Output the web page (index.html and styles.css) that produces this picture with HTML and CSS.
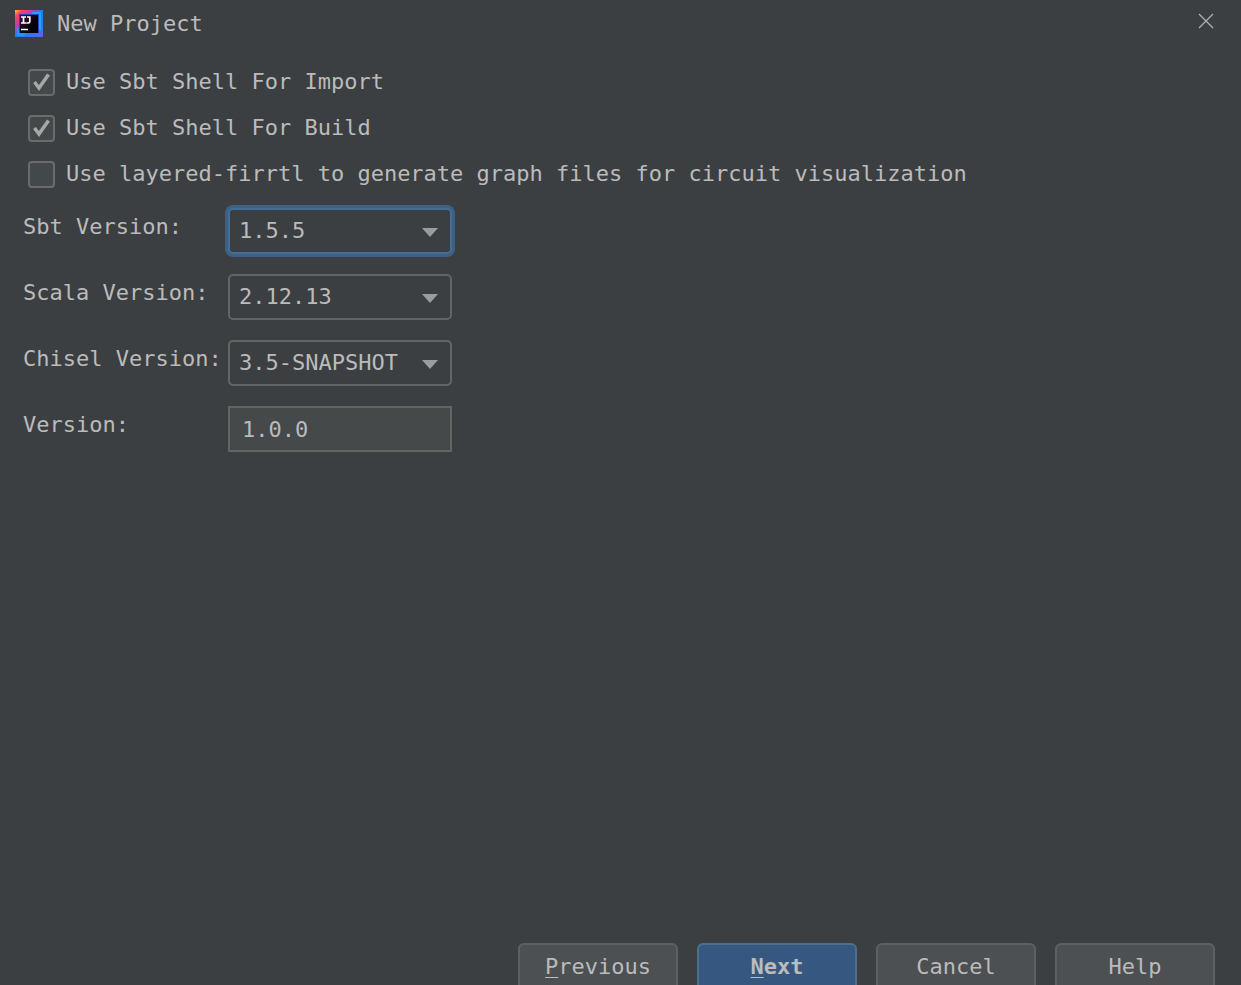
FILE: index.html
```html
<!DOCTYPE html>
<html lang="en">
<head>
<meta charset="utf-8">
<title>New Project</title>
<link rel="stylesheet" href="styles.css">
</head>
<body>
<div class="dialog">
  <header class="titlebar">
    <svg class="logo" viewBox="0 0 28 28" aria-hidden="true">
      <defs>
        <linearGradient id="edge" x1="0" y1="0" x2="1" y2="1">
          <stop offset="0" stop-color="#ffc53a"/>
          <stop offset=".14" stop-color="#fe3f63"/>
          <stop offset=".34" stop-color="#b83fae"/>
          <stop offset=".5" stop-color="#1484f5"/>
          <stop offset="1" stop-color="#5a62ee"/>
        </linearGradient>
        <linearGradient id="core" x1="0" y1="0" x2="1" y2="1">
          <stop offset="0" stop-color="#4a0d3c"/>
          <stop offset=".6" stop-color="#050208"/>
        </linearGradient>
      </defs>
      <rect width="28" height="27" fill="url(#edge)"/>
      <path d="M18 2h8v19l-3-3V5h-8z" fill="#20a5f8"/>
      <path d="M2 17l3 2v4h6l-2 3H2z" fill="#149cf8"/>
      <rect x="4" y="4" width="20" height="19" fill="#1b4fae"/>
      <rect x="5" y="5" width="18" height="18" fill="url(#core)"/>
      <path d="M6 7h5M8.500 7v6M6 13h5M12 7h3.500M14.800 6.200v5.300q0 1.500-1.500 1.500h-2M6 19.500h7" fill="none" stroke="#fff" stroke-width="1.700"/>
    </svg>
    <h1 class="title">New Project</h1>
    <button class="close" type="button" aria-label="Close">
      <svg viewBox="0 0 16 16" aria-hidden="true"><path d="M1 1l14 14M15 1L1 15"/></svg>
    </button>
  </header>
  <main class="content">
    <div class="checks">
      <label class="check"><input type="checkbox" checked>Use Sbt Shell For Import</label>
      <label class="check"><input type="checkbox" checked>Use Sbt Shell For Build</label>
      <label class="check"><input type="checkbox">Use layered-firrtl to generate graph files for circuit visualization</label>
    </div>
    <div class="fields">
      <label class="name" for="sbt">Sbt Version:</label>
      <div class="combo"><select id="sbt" class="field active"><option>1.5.5</option></select><svg class="arrow" viewBox="0 0 16 9" aria-hidden="true"><path d="M0 0h16L8 9z"/></svg></div>
      <label class="name" for="scala">Scala Version:</label>
      <div class="combo"><select id="scala" class="field"><option>2.12.13</option></select><svg class="arrow" viewBox="0 0 16 9" aria-hidden="true"><path d="M0 0h16L8 9z"/></svg></div>
      <label class="name" for="chisel">Chisel Version:</label>
      <div class="combo"><select id="chisel" class="field"><option>3.5-SNAPSHOT</option></select><svg class="arrow" viewBox="0 0 16 9" aria-hidden="true"><path d="M0 0h16L8 9z"/></svg></div>
      <label class="name" for="version">Version:</label>
      <input id="version" class="field text" type="text" value="1.0.0">
    </div>
  </main>
  <footer class="actions">
    <button class="button" type="button"><span class="key">P</span>revious</button>
    <button class="button primary" type="button"><span class="key">N</span>ext</button>
    <button class="button" type="button">Cancel</button>
    <button class="button" type="button">Help</button>
  </footer>
</div>
</body>
</html>
```
FILE: styles.css
```css
* {
  box-sizing: border-box;
}

body {
  margin: 0;
  background: #3c3f41;
  color: #bbbbbb;
}

body,
button,
input,
select {
  font-family: "DejaVu Sans Mono", monospace;
  font-size: 22px;
  line-height: 28px;
}

.dialog {
  display: flex;
  flex-direction: column;
  height: 100vh;
  overflow: hidden;
}

.titlebar {
  display: flex;
  align-items: center;
  gap: 14px;
  height: 48px;
  padding: 0 27px 0 15px;
}

.logo {
  width: 28px;
  height: 28px;
}

.title {
  flex: 1;
  margin: 0;
  font-size: 22px;
  font-weight: normal;
}

.close {
  display: flex;
  padding: 0 0 6px;
  border: 0;
  background: none;
}

.close svg {
  width: 16px;
  height: 16px;
  fill: none;
  stroke: #aeb0b1;
  stroke-width: 1.3;
}

.content {
  flex: 1;
  padding: 20px 23px;
}

.checks {
  display: grid;
  gap: 18px;
  padding-left: 5px;
}

.check {
  display: flex;
  align-items: center;
  gap: 11px;
}

.check input {
  appearance: none;
  flex: none;
  width: 27px;
  height: 27px;
  margin: 0;
  border: 2px solid #6b6b6b;
  border-radius: 4px;
  background: #43494a;
}

.check input:checked {
  background: #43494a url("data:image/svg+xml,%3Csvg xmlns='http://www.w3.org/2000/svg' viewBox='0 0 23 23'%3E%3Cpath d='M4.500 11l4.500 6L18.500 3.500' fill='none' stroke='%23a7a7a7' stroke-width='3.500'/%3E%3C/svg%3E") center / 23px 23px;
}

.fields {
  display: grid;
  grid-template-columns: 193px 224px;
  column-gap: 12px;
  row-gap: 20px;
  margin-top: 20px;
}

.name {
  padding-top: 5px;
  white-space: nowrap;
}

.combo {
  position: relative;
}

.field {
  appearance: none;
  display: block;
  width: 100%;
  height: 46px;
  padding: 0 9px;
  border: 2px solid #646464;
  border-radius: 5px;
  outline: 0;
  background: #3c3f41;
  color: #bbbbbb;
}

.active {
  border-color: #466d94;
  box-shadow: 0 0 0 3px #3d6185;
}

.text {
  padding: 0 12px;
  border-radius: 0;
  background: #45494a;
}

.arrow {
  position: absolute;
  top: 20px;
  right: 14px;
  width: 16px;
  height: 9px;
  fill: #9a9da0;
  pointer-events: none;
}

.actions {
  display: flex;
  flex: none;
  align-items: flex-start;
  justify-content: flex-end;
  gap: 19px;
  height: 42px;
  padding: 0 26px;
}

.button {
  flex: none;
  width: 160px;
  height: 48px;
  padding: 0;
  border: 2px solid #5e6060;
  border-radius: 6px;
  background: #4c5052;
  color: #bbbbbb;
}

.primary {
  border-color: #4c708c;
  background: #365880;
  font-weight: bold;
}

.key {
  text-decoration: underline;
  text-decoration-thickness: 1px;
  text-underline-offset: 3px;
}
```
